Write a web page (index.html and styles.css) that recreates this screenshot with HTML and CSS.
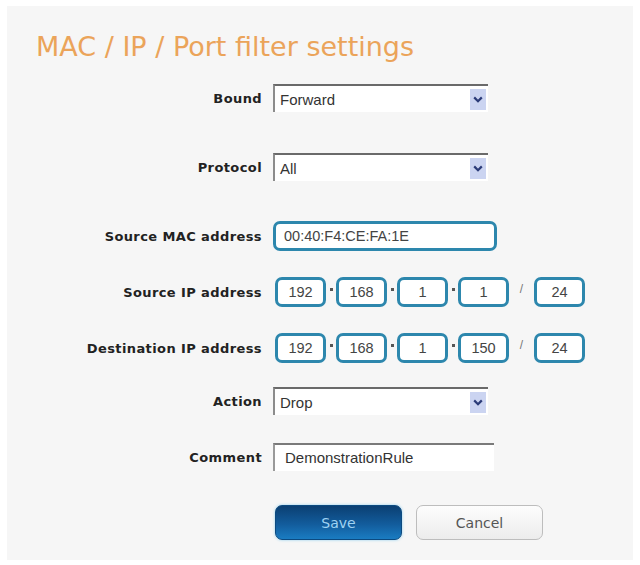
FILE: index.html
```html
<!DOCTYPE html>
<html lang="en">
<head>
    <meta charset="UTF-8">
    <meta name="viewport" content="width=device-width, initial-scale=1.0">
    <title>MAC / IP / Port filter settings</title>
    <link rel="stylesheet" href="styles.css">
</head>
<body>

<div class="panel">
    <h1 class="title">MAC / IP / Port filter settings</h1>

    <form class="filter-form" onsubmit="return false;">
        <div class="row">
            <label class="field-label">Bound</label>
            <div class="select">
                <span class="select-value">Forward</span>
                <span class="select-arrow"><svg width="10" height="7" viewBox="0 0 10 7"><path d="M1.2 1.4 L5 5.2 L8.8 1.4" fill="none" stroke="#2b3b78" stroke-width="2.2"/></svg></span>
            </div>
        </div>

        <div class="row row-loose">
            <label class="field-label">Protocol</label>
            <div class="select">
                <span class="select-value">All</span>
                <span class="select-arrow"><svg width="10" height="7" viewBox="0 0 10 7"><path d="M1.2 1.4 L5 5.2 L8.8 1.4" fill="none" stroke="#2b3b78" stroke-width="2.2"/></svg></span>
            </div>
        </div>

        <div class="row row-loose">
            <label class="field-label">Source MAC address</label>
            <div class="box box-mac">00:40:F4:CE:FA:1E</div>
        </div>

        <div class="row">
            <label class="field-label">Source IP address</label>
            <div class="ip-group">
                <div class="box box-ip">192</div><span class="ip-dot"></span>
                <div class="box box-ip">168</div><span class="ip-dot"></span>
                <div class="box box-ip">1</div><span class="ip-dot"></span>
                <div class="box box-ip">1</div><span class="ip-slash">/</span>
                <div class="box box-ip">24</div>
            </div>
        </div>

        <div class="row">
            <label class="field-label">Destination IP address</label>
            <div class="ip-group">
                <div class="box box-ip">192</div><span class="ip-dot"></span>
                <div class="box box-ip">168</div><span class="ip-dot"></span>
                <div class="box box-ip">1</div><span class="ip-dot"></span>
                <div class="box box-ip">150</div><span class="ip-slash">/</span>
                <div class="box box-ip">24</div>
            </div>
        </div>

        <div class="row row-tight">
            <label class="field-label">Action</label>
            <div class="select">
                <span class="select-value">Drop</span>
                <span class="select-arrow"><svg width="10" height="7" viewBox="0 0 10 7"><path d="M1.2 1.4 L5 5.2 L8.8 1.4" fill="none" stroke="#2b3b78" stroke-width="2.2"/></svg></span>
            </div>
        </div>

        <div class="row">
            <label class="field-label">Comment</label>
            <div class="text-input">DemonstrationRule</div>
        </div>

        <div class="row row-buttons">
            <span class="field-label"></span>
            <div class="buttons">
                <button type="submit" class="btn btn-save">Save</button>
                <button type="button" class="btn btn-cancel">Cancel</button>
            </div>
        </div>
    </form>
</div>

</body>
</html>
```

FILE: styles.css
```css
/* filter settings page */

body {
margin: 0;
background-color: #fff;
font-family: 'DejaVu Sans', Verdana, sans-serif;
}

.panel {
margin: 6px 7px 5px;
height: 528px;
padding-top: 26px;
background-color: #f6f6f6;
}

.title {
margin: 0 0 21px 29px;
font-size: 27px;
line-height: 30px;
font-weight: normal;
color: #eba45a;
}

.row {
display: flex;
align-items: center;
height: 30px;
margin-top: 26px;
}

.row:first-child {
margin-top: 0;
}

.row-loose {
margin-top: 39px;
}

.row-tight {
margin-top: 23px;
}

.row-buttons {
height: 35px;
margin-top: 33px;
}

.field-label {
width: 255px;
flex-shrink: 0;
margin-right: 11px;
text-align: right;
font-size: 13px;
letter-spacing: 0.4px;
font-weight: bold;
color: #222;
}

/* drop-down look */
.select {
display: flex;
align-items: center;
justify-content: space-between;
width: 213px;
height: 26px;
background-color: #fff;
border-top: 2px solid #6a6a6a;
border-left: 2px solid #8c8c8c;
font-family: 'Liberation Sans', Arial, sans-serif;
font-size: 15px;
color: #333;
}

.select-value {
padding-left: 5px;
}

.select-arrow {
display: flex;
align-items: center;
justify-content: center;
width: 16px;
height: 21px;
margin-right: 2px;
background-color: #cbd4f1;
}

/* rounded blue fields */
.box {
display: flex;
align-items: center;
box-sizing: border-box;
height: 30px;
background-color: #fff;
border: 3px solid #2d87ad;
border-radius: 7px;
font-family: 'Liberation Sans', Arial, sans-serif;
font-size: 14.5px;
color: #444;
}

.box-mac {
width: 224px;
padding-left: 8px;
}

.ip-group {
display: flex;
align-items: center;
margin-left: 2px;
}

.box-ip {
width: 51px;
justify-content: center;
}

.ip-dot {
display: flex;
justify-content: center;
width: 10px;
}

.ip-dot::after {
content: "";
width: 3px;
height: 3px;
margin-bottom: 5px;
background-color: #555;
}

.ip-slash {
width: 25px;
margin-bottom: 6px;
text-align: center;
font-family: 'Liberation Sans', Arial, sans-serif;
font-size: 12px;
color: #777;
}

.text-input {
box-sizing: border-box;
width: 221px;
height: 28px;
padding: 4px 0 0 10px;
background-color: #fff;
border-top: 2px solid #7a7a7a;
border-left: 2px solid #9a9a9a;
font-family: 'Liberation Sans', Arial, sans-serif;
font-size: 15px;
color: #333;
}

.buttons {
display: flex;
gap: 14px;
margin-left: 2px;
}

.btn {
width: 127px;
height: 35px;
border-radius: 7px;
font-family: 'DejaVu Sans', Verdana, sans-serif;
font-size: 14px;
cursor: pointer;
}

.btn-save {
background: linear-gradient(#0b3f72, #125c9c 55%, #1a7cc2);
border: 1px solid #0c4a80;
color: #9fd2f2;
box-shadow: 0 0 3px #8fd0f0;
}

.btn-cancel {
background: linear-gradient(#fdfdfd, #ececec);
border: 1px solid #bdbdbd;
color: #555;
}
```
